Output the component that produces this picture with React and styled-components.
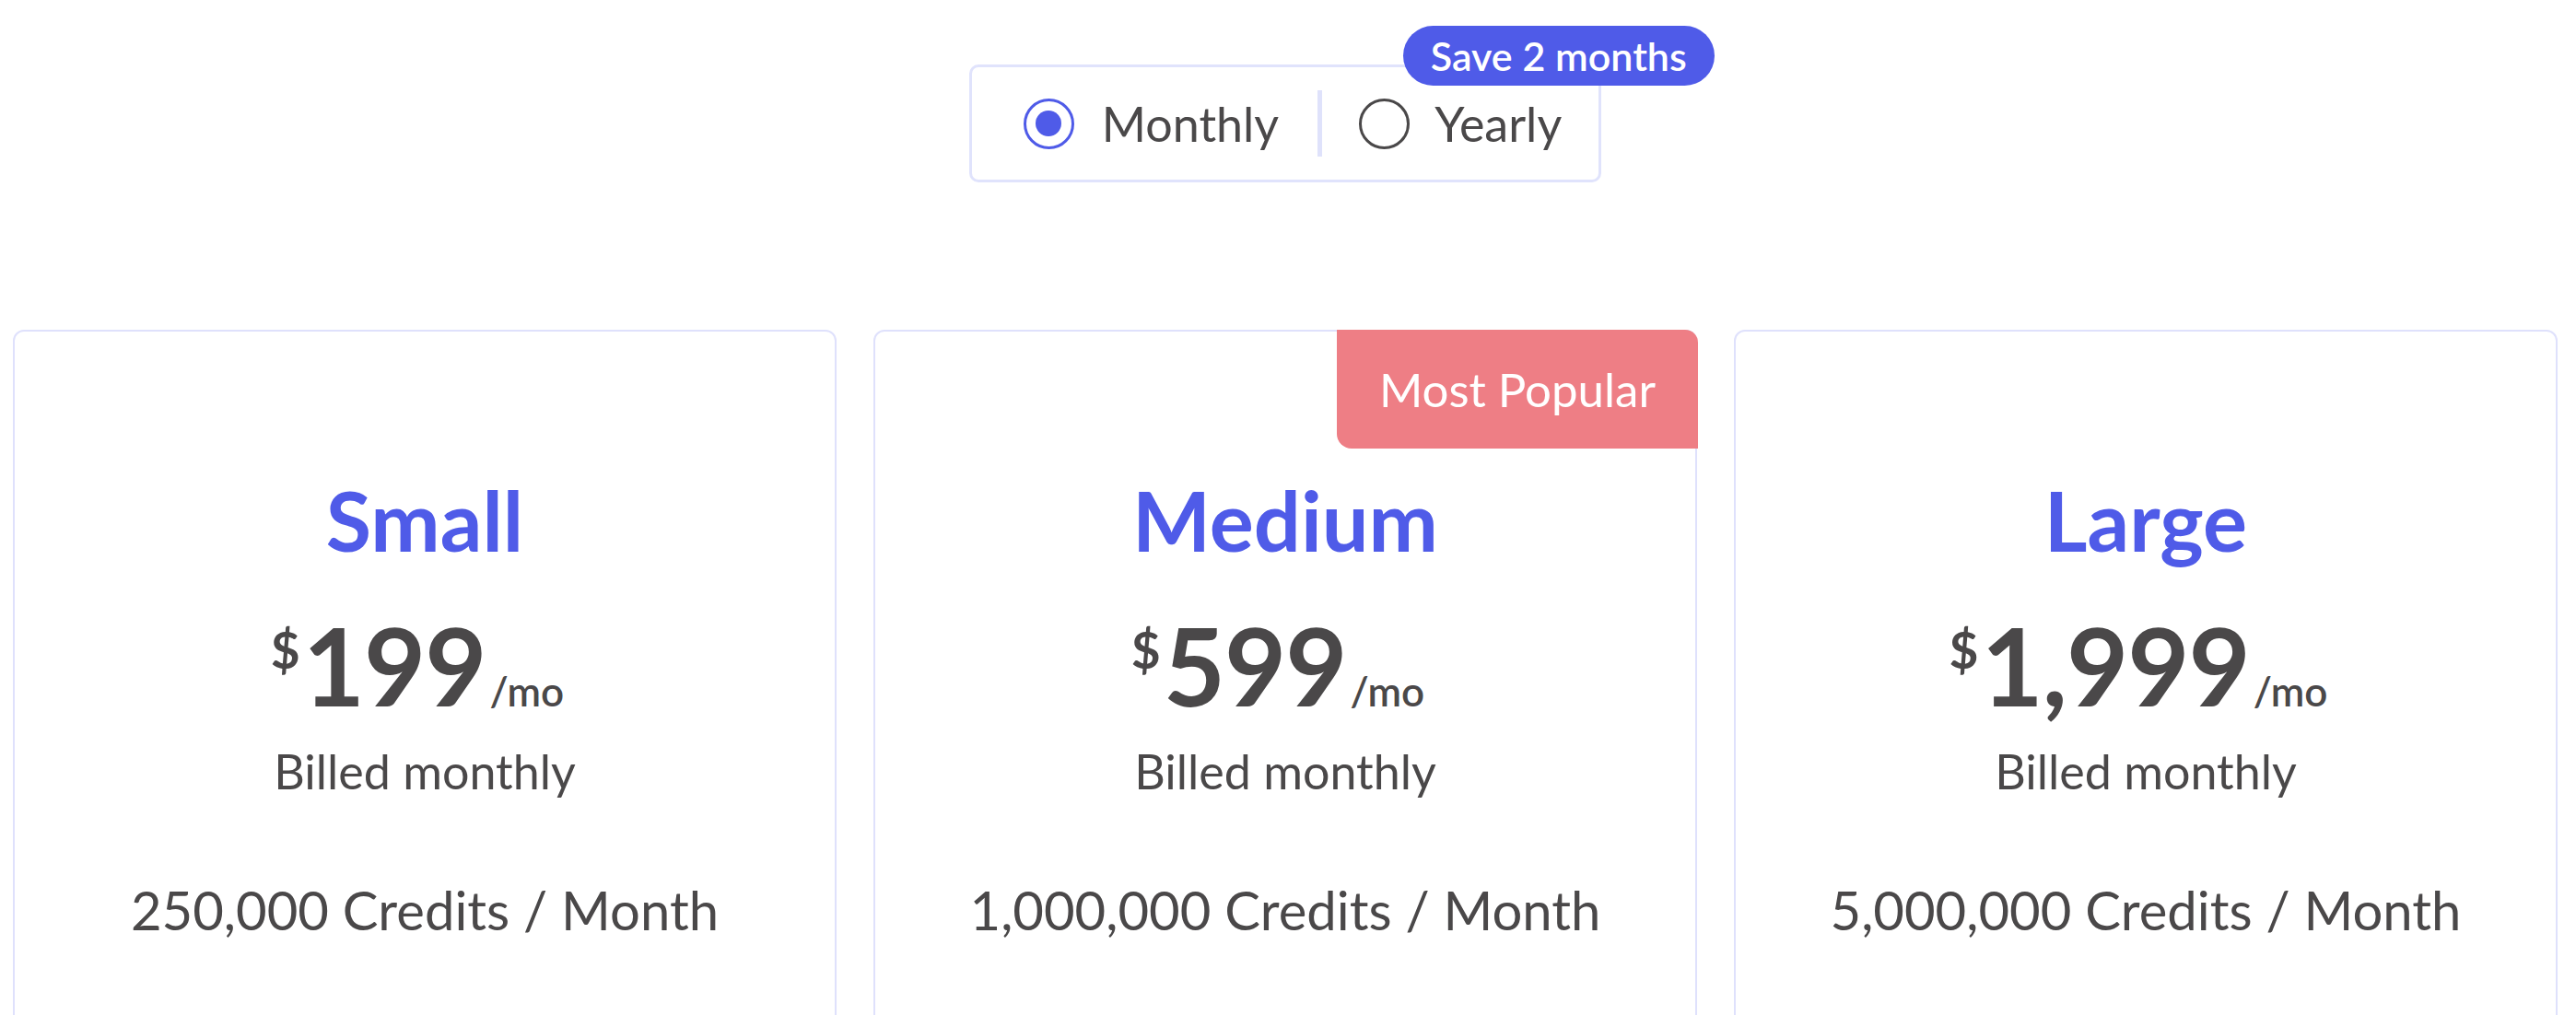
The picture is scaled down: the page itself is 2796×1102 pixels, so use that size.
import React from 'react';
import styled, { createGlobalStyle } from 'styled-components';

const GlobalStyle = createGlobalStyle`
  html, body {
    margin: 0;
    padding: 0;
    overflow: hidden;
    background: #fff;
  }

  body {
    font-family: Lato, "Open Sans", sans-serif;
    color: #4a4849;
  }
`;

const Page = styled.div`
  display: flex;
  flex-direction: column;
  align-items: center;
  padding: 70px 20px 0 14px;
`;

const Toggle = styled.div`
  position: relative;
  display: flex;
  align-items: center;
  height: 122px;
  padding: 0 40px 0 56px;
  border: 3px solid #e0e3fc;
  border-radius: 10px;
`;

const Option = styled.label`
  display: flex;
  align-items: center;
  gap: ${(p) => p.gap}px;
  font-size: 52px;
  color: #4a4849;
  cursor: pointer;
`;

const Radio = styled.span`
  box-sizing: border-box;
  display: flex;
  align-items: center;
  justify-content: center;
  width: 55px;
  height: 55px;
  border-radius: 50%;
  border: 3px solid ${(p) => (p.checked ? '#4f5be8' : '#4a4849')};

  &::after {
    content: '';
    display: ${(p) => (p.checked ? 'block' : 'none')};
    width: 28px;
    height: 28px;
    border-radius: 50%;
    background: #4f5be8;
  }
`;

const Divider = styled.span`
  width: 5px;
  height: 72px;
  margin: 0 40px 0 42px;
  background: #dfe2fb;
`;

const SaveBadge = styled.span`
  position: absolute;
  left: 468px;
  top: -45px;
  height: 65px;
  padding: 0 30px;
  display: flex;
  align-items: center;
  border-radius: 33px;
  background: #4f5be8;
  color: #fff;
  font-size: 43px;
  font-weight: 600;
  white-space: nowrap;
`;

const Plans = styled.div`
  align-self: stretch;
  display: grid;
  grid-template-columns: repeat(3, 1fr);
  gap: 40px;
  margin-top: 160px;
`;

const Card = styled.div`
  position: relative;
  display: flex;
  flex-direction: column;
  align-items: center;
  height: 900px;
  padding-top: 159px;
  border: 2px solid #dfe1fc;
  border-radius: 12px;
`;

const PopularBadge = styled.div`
  position: absolute;
  top: -2px;
  right: -3px;
  height: 129px;
  padding: 0 46px;
  display: flex;
  align-items: center;
  border-radius: 0 14px 0 16px;
  background: #ee7e85;
  color: #fff;
  font-size: 51px;
`;

const PlanName = styled.h2`
  margin: 0;
  font-size: 90px;
  line-height: 1;
  font-weight: 700;
  color: #4f5be8;
`;

const Price = styled.div`
  display: flex;
  align-items: baseline;
  margin-top: 56px;
  margin-left: -16px;
  line-height: 1;
`;

const Currency = styled.span`
  align-self: flex-start;
  margin-top: 13px;
  margin-right: 3px;
  font-size: 55px;
  font-weight: 700;
`;

const Amount = styled.span`
  font-size: 116px;
  font-weight: 700;
  letter-spacing: -1px;
`;

const Period = styled.span`
  margin-left: 4px;
  font-size: 44px;
  font-weight: 600;
`;

const Billing = styled.div`
  margin-top: 30px;
  font-size: 52px;
  line-height: 1;
`;

const Credits = styled.div`
  margin-top: 96px;
  font-size: 58px;
  line-height: 1;
`;

const plans = [
  { name: 'Small', price: '199', credits: '250,000' },
  { name: 'Medium', price: '599', credits: '1,000,000', popular: true },
  { name: 'Large', price: '1,999', credits: '5,000,000' },
];

const PlanCard = ({ plan }) => (
  <Card>
    {plan.popular && <PopularBadge>Most Popular</PopularBadge>}
    <PlanName>{plan.name}</PlanName>
    <Price>
      <Currency>$</Currency>
      <Amount>{plan.price}</Amount>
      <Period>/mo</Period>
    </Price>
    <Billing>Billed monthly</Billing>
    <Credits>{plan.credits} Credits / Month</Credits>
  </Card>
);

const App = () => {
  return (
    <>
      <GlobalStyle />
      <Page>
        <Toggle>
          <Option gap={30}>
            <Radio checked />
            Monthly
          </Option>
          <Divider />
          <Option gap={27}>
            <Radio />
            Yearly
          </Option>
          <SaveBadge>Save 2 months</SaveBadge>
        </Toggle>
        <Plans>
          {plans.map((plan) => (
            <PlanCard plan={plan} key={plan.name} />
          ))}
        </Plans>
      </Page>
    </>
  );
};

export default App;
